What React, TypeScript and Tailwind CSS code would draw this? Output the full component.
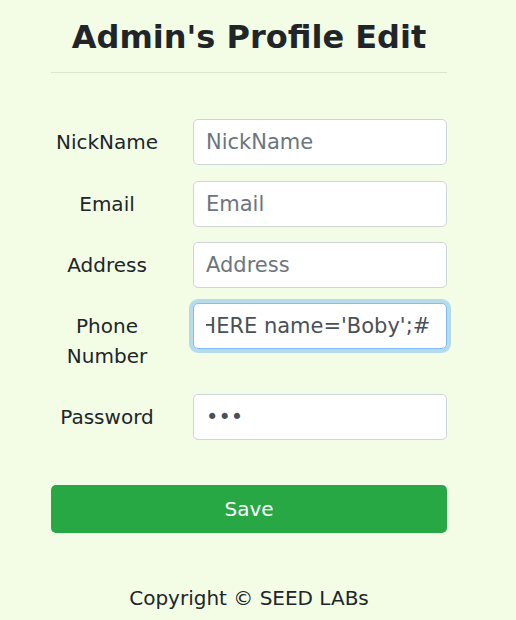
import React, { useEffect, useRef } from 'react';

const fields = [
  { label: 'NickName', placeholder: 'NickName' },
  { label: 'Email', placeholder: 'Email' },
  { label: 'Address', placeholder: 'Address' },
];

const inputBase =
  'w-full h-[46px] px-[12px] text-[21px] leading-[30px] text-[#495057] bg-white border border-[#ced4da] rounded-[5px] outline-none placeholder:text-[#6c757d]';

const App: React.FC = () => {
  const phoneRef = useRef<HTMLInputElement>(null);

  useEffect(() => {
    const el = phoneRef.current;
    if (el) el.scrollLeft = el.scrollWidth;
  }, []);

  return (
    <div
      className="min-h-[620px] w-full bg-[#f3fde6] text-[#212529]"
      style={{ fontFamily: '"DejaVu Sans", Verdana, sans-serif' }}
    >
      <div className="ml-[51px] w-[396px] pt-[18px]">
        <h2 className="text-center text-[32px] font-bold leading-[1.2]">Admin's Profile Edit</h2>
        <hr className="mt-4 border-0 border-t border-[#dbe4cf]" />

        <form className="mt-[46px]" onSubmit={(e) => e.preventDefault()}>
          {fields.map((f, i) => (
            <div key={f.label} className={`${i === 0 ? 'mb-[16px]' : 'mb-[15px]'} flex gap-[30px]`}>
              <label className="w-[112px] shrink-0 py-[8px] text-center text-[20px] leading-[30px]">
                {f.label}
              </label>
              <div className="flex-1">
                <input type="text" placeholder={f.placeholder} className={inputBase} />
              </div>
            </div>
          ))}

          {/* Phone row, focused */}
          <div className="mb-[15px] flex gap-[30px]">
            <label className="w-[112px] shrink-0 py-[8px] text-center text-[20px] leading-[30px]">
              Phone
              <br />
              Number
            </label>
            <div className="flex-1">
              <input
                ref={phoneRef}
                type="text"
                defaultValue="5555', salary=999999 WHERE name='Boby';#"
                className="w-full h-[46px] pl-[12px] pr-[16px] text-[21px] leading-[30px] text-[#495057] bg-white border border-[#80bdff] rounded-[5px] outline-none shadow-[0_0_0_4px_rgba(0,123,255,0.25)]"
              />
            </div>
          </div>

          <div className="mb-[15px] flex gap-[30px]">
            <label className="w-[112px] shrink-0 py-[8px] text-center text-[20px] leading-[30px]">
              Password
            </label>
            <div className="flex-1">
              <input type="password" defaultValue="abc" className={inputBase} />
            </div>
          </div>

          <button
            type="submit"
            className="mt-[30px] h-[48px] w-full rounded-[5px] bg-[#28a745] text-[20px] leading-[30px] text-white"
          >
            Save
          </button>
        </form>

        <p className="mt-[50px] text-center text-[20px] leading-[30px]">Copyright © SEED LABs</p>
      </div>
    </div>
  );
};

export default App;
